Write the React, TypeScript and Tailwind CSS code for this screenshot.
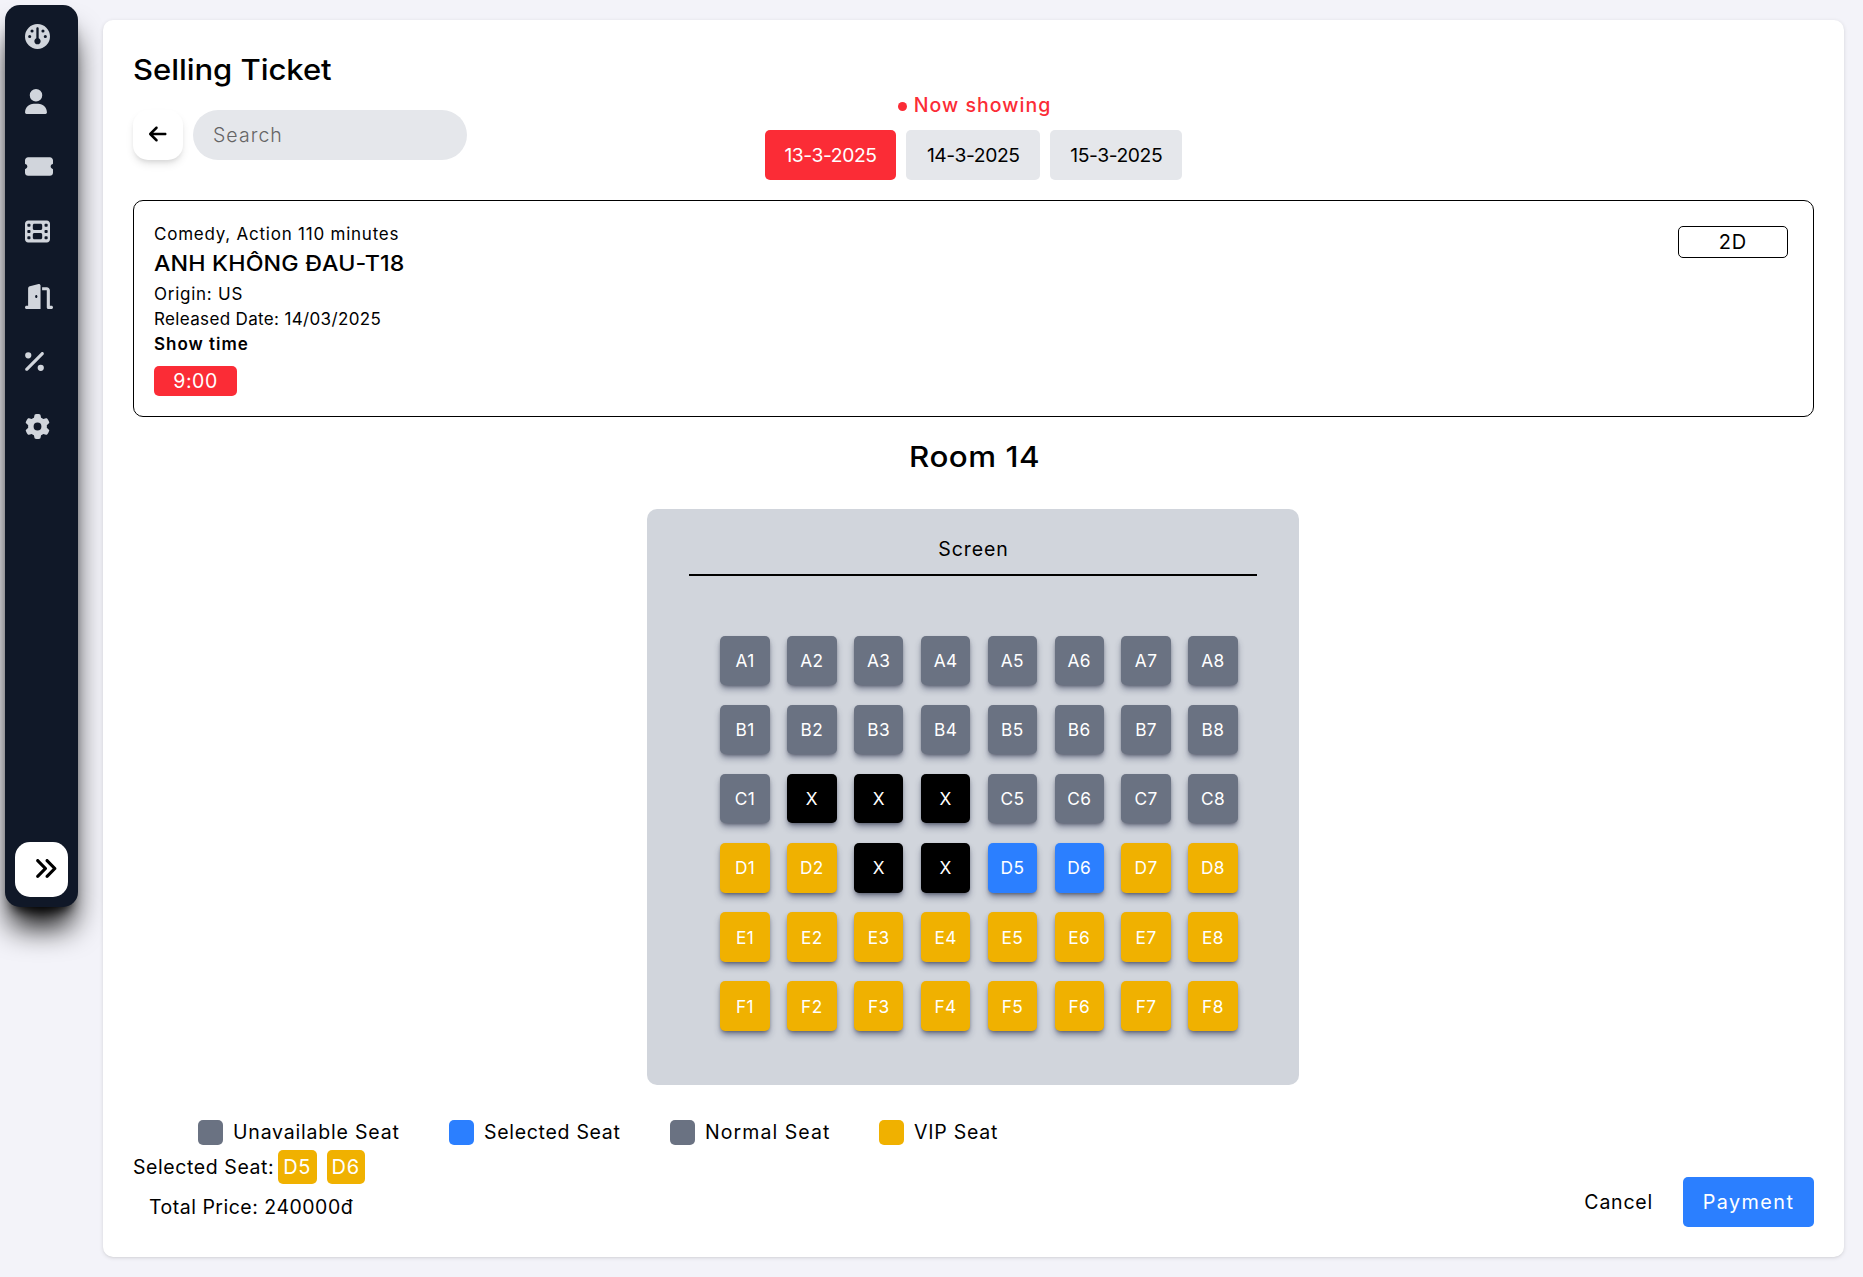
import React from "react";
import {
  FaAnglesRight,
  FaArrowLeft,
  FaDoorOpen,
  FaFilm,
  FaGauge,
  FaGear,
  FaPercent,
  FaTicketSimple,
  FaUser,
} from "react-icons/fa6";

const navItems = [
  { label: "Dashboard", icon: <FaGauge className="h-[25px] w-[25px]" /> },
  { label: "Users", icon: <FaUser className="h-[25px] w-[22px]" /> },
  { label: "Tickets", icon: <FaTicketSimple className="h-[25px] w-[28px]" /> },
  { label: "Movies", icon: <FaFilm className="h-[25px] w-[25px]" /> },
  { label: "Rooms", icon: <FaDoorOpen className="h-[25px] w-[28px]" /> },
  { label: "Discounts", icon: <FaPercent className="h-[25px] w-[19px]" /> },
  { label: "Settings", icon: <FaGear className="h-[25px] w-[25px]" /> },
];

const rows = ["A", "B", "C", "D", "E", "F"];
const columns = [1, 2, 3, 4, 5, 6, 7, 8];
const taken = ["C2", "C3", "C4", "D3", "D4"];
const selected = ["D5", "D6"];

function seatColor(id: string) {
  if (taken.includes(id)) return "bg-black";
  if (selected.includes(id)) return "bg-[#2b7fff]";
  return id < "D" ? "bg-[#6a7282]" : "bg-[#f0b100]";
}

function Sidebar() {
  return (
    <aside className="m-[5px] flex h-[902px] w-[73px] shrink-0 flex-col justify-between rounded-[15px] bg-[#101828] p-[10px] shadow-[0_25px_31px_-6px_#000,0_10px_12px_-8px_#000]">
      <nav className="flex flex-col gap-10 pt-[9px] pl-[10px] text-[#d1d5dc]">
        {navItems.map((item) => (
          <a key={item.label} aria-label={item.label}>
            {item.icon}
          </a>
        ))}
      </nav>
      <button aria-label="Expand" className="flex h-[55px] w-[53px] items-center justify-end rounded-[15px] bg-white pr-[10px] pb-[2px] text-black">
        <FaAnglesRight className="h-[25px] w-[25px]" />
      </button>
    </aside>
  );
}

function Header() {
  return (
    <div className="grid h-[90px] grid-cols-[1fr_auto_1fr]">
      <div className="flex gap-[10px] pt-5">
        <button aria-label="Back" className="flex size-[50px] items-center justify-center rounded-[15px] bg-white pb-[2px] shadow-[0_5px_8px_-1px_rgb(0_0_0/0.1),0_3px_5px_-2px_rgb(0_0_0/0.1)]">
          <FaArrowLeft className="h-5 w-[17.5px]" />
        </button>
        <input
          placeholder="Search"
          className="h-[50px] w-[274px] rounded-full bg-gray-200 px-5 text-[19.5px] font-light tracking-[1.05px] placeholder:text-[#656565]"
        />
      </div>
      <div className="flex flex-col items-center gap-[10px]">
        <div className="flex h-[30px] items-center pl-[2px] text-[#fb2c36]">
          <span className="mt-[2px] mr-[7px] size-[9px] rounded-full bg-[#fb2c36]" />
          <span className="text-[19.5px] leading-[30px] font-medium tracking-[1.05px]">Now showing</span>
        </div>
        <div className="flex gap-[10px] text-[19.3px] tracking-[-0.42px]">
          <button className="h-[50px] w-[131.5px] rounded-[5px] bg-[#fb2c36] text-white">13-3-2025</button>
          <button className="h-[50px] w-[134px] rounded-[5px] bg-gray-200">14-3-2025</button>
          <button className="h-[50px] w-[132px] rounded-[5px] bg-gray-200">15-3-2025</button>
        </div>
      </div>
      <div />
    </div>
  );
}

function MovieCard() {
  return (
    <section className="mt-5 flex h-[217px] items-start justify-between rounded-[10px] border border-black p-5">
      <div className="flex flex-col items-start text-[17px] leading-[25px]">
        <p className="pt-[1px] tracking-[0.77px]">Comedy, Action 110 minutes</p>
        <h2 className="origin-left scale-x-[1.07] text-[21.7px] leading-[33px] font-medium tracking-[0.15px]">ANH KHÔNG ĐAU-T18</h2>
        <p className="pt-[2px] tracking-[0.75px]">Origin: US</p>
        <p className="tracking-[0.35px]">Released Date: 14/03/2025</p>
        <p className="font-semibold tracking-[0.98px]">Show time</p>
        <button className="mt-[9px] h-[30px] w-[83px] rounded-[5px] bg-[#fb2c36] text-[19.5px] tracking-[0.55px] text-white">9:00</button>
      </div>
      <span className="mt-[5px] mr-[5px] flex h-8 w-[110px] items-center justify-center rounded-[5px] border border-black text-[20px] tracking-[1px]">2D</span>
    </section>
  );
}

function SeatMap() {
  return (
    <section className="mt-8 ml-[514px] flex h-[576px] w-[652px] flex-col items-center rounded-[10px] bg-[#d1d5dc] pt-[25px]">
      <p className="pl-[1px] text-[19.5px] leading-[30px] tracking-[0.9px]">Screen</p>
      <div className="mt-[10px] h-[2px] w-[568px] bg-black" />
      <div className="mt-[60px] mr-[-12px] grid grid-cols-[repeat(8,49.4px)] gap-x-[17.46px] gap-y-[19.8px]">
        {rows.flatMap((row) =>
          columns.map((column) => {
            const id = `${row}${column}`;
            return (
              <button
                key={id}
                className={`flex h-[49.3px] items-center justify-center rounded-[5px] pt-[1px] text-[17.3px] tracking-[0.4px] text-white shadow-[0_5px_7px_-1px_rgb(30_41_75/0.45),0_2px_4px_-2px_rgb(0_0_0/0.6)] ${seatColor(id)}`}
              >
                {taken.includes(id) ? "X" : id}
              </button>
            );
          }),
        )}
      </div>
    </section>
  );
}

function Footer() {
  return (
    <footer className="mt-[35px] text-[19.5px] leading-[30px]">
      <ul className="flex h-[25px] items-center pl-[65px]">
        <li className="flex w-[251px] items-center gap-[10px]">
          <span className="size-[25px] rounded-[5px] bg-[#6a7282]" />
          <span className="-mt-[2px] tracking-[0.8px]">Unavailable Seat</span>
        </li>
        <li className="flex w-[221px] items-center gap-[10px]">
          <span className="size-[25px] rounded-[5px] bg-[#2b7fff]" />
          <span className="-mt-[2px] tracking-[0.7px]">Selected Seat</span>
        </li>
        <li className="flex w-[209px] items-center gap-[10px]">
          <span className="size-[25px] rounded-[5px] bg-[#6a7282]" />
          <span className="-mt-[2px] tracking-[1.07px]">Normal Seat</span>
        </li>
        <li className="flex items-center gap-[10px]">
          <span className="size-[25px] rounded-[5px] bg-[#f0b100]" />
          <span className="-mt-[2px] tracking-[0.75px]">VIP Seat</span>
        </li>
      </ul>
      <div className="mt-[5px] flex items-end justify-between">
        <div className="mb-[5px]">
          <div className="flex h-[34px] items-center">
            <span className="w-[145px] tracking-[0.58px]">Selected Seat:</span>
            <div className="flex gap-[10px] text-white">
              {selected.map((id) => (
                <span key={id} className="flex h-[34px] w-[38.5px] items-center justify-center rounded-[5px] bg-[#f0b100] text-[20px] tracking-[0.8px]">
                  {id}
                </span>
              ))}
            </div>
          </div>
          <p className="mt-2 pl-4 tracking-[0.5px]">Total Price: 240000đ</p>
        </div>
        <div className="flex gap-[30px]">
          <button className="tracking-[0.78px]">Cancel</button>
          <button className="h-[50px] w-[131px] rounded-[5px] bg-[#2b7fff] text-[19.8px] tracking-[1.45px] text-white">Payment</button>
        </div>
      </div>
    </footer>
  );
}

export default function App() {
  return (
    <div className="flex h-[1277px] w-[1863px] items-start overflow-hidden bg-[#f3f3f9] font-['Inter',sans-serif] text-black">
      <Sidebar />
      <main className="mt-5 ml-5 h-[1237px] w-[1741px] rounded-[10px] bg-white p-[30px] shadow-[0_1px_4px_rgb(0_0_0/0.12),0_1px_2px_-1px_rgb(0_0_0/0.1)]">
        <h1 className="origin-left scale-x-[1.07] text-[29px] leading-[40px] font-medium tracking-[-0.05px]">Selling Ticket</h1>
        <Header />
        <MovieCard />
        <h2 className="mt-5 scale-x-[1.08] pl-[2px] text-center text-[29px] leading-[40px] font-medium tracking-[0.5px]">Room 14</h2>
        <SeatMap />
        <Footer />
      </main>
    </div>
  );
}
